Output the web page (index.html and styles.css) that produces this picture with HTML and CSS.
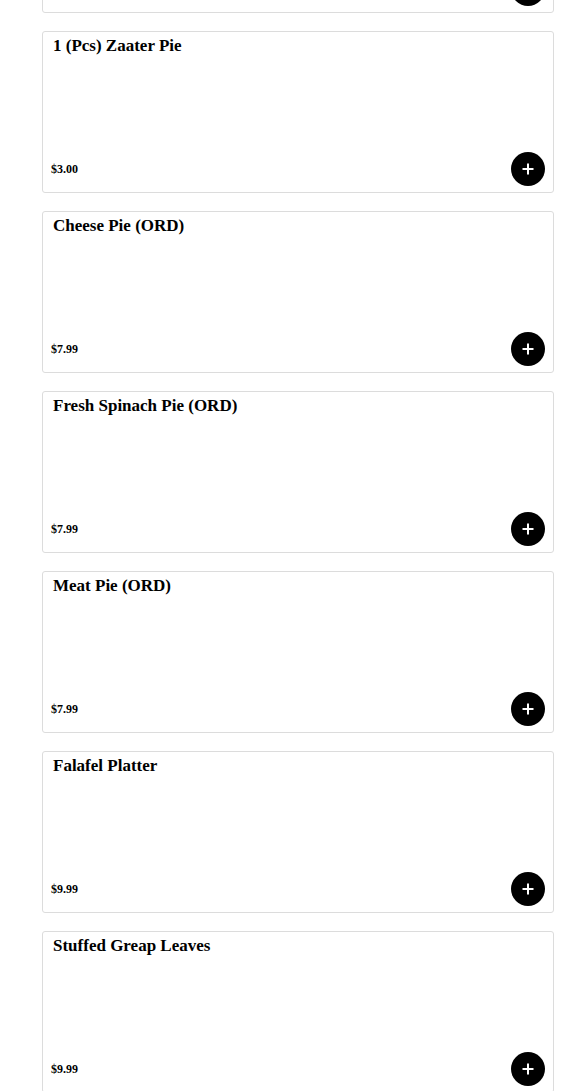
FILE: index.html
```html
<!DOCTYPE html>
<html>
<head>
<meta charset="utf-8">
<link rel="stylesheet" href="styles.css">
</head>
<body>
<main class="menu">
  <div class="list">
    <article class="card">
      <h3 class="title">Hummus</h3>
      <div class="bottom"><span class="price">$5.99</span><button class="add" aria-label="Add"><svg viewBox="0 0 12 12" width="12" height="12"><path d="M6 0.5V11.5M0.5 6H11.5" stroke="#fff" stroke-width="2" fill="none"/></svg></button></div>
    </article>
    <article class="card">
      <h3 class="title">1 (Pcs) Zaater Pie</h3>
      <div class="bottom"><span class="price">$3.00</span><button class="add" aria-label="Add"><svg viewBox="0 0 12 12" width="12" height="12"><path d="M6 0.5V11.5M0.5 6H11.5" stroke="#fff" stroke-width="2" fill="none"/></svg></button></div>
    </article>
    <article class="card">
      <h3 class="title">Cheese Pie (ORD)</h3>
      <div class="bottom"><span class="price">$7.99</span><button class="add" aria-label="Add"><svg viewBox="0 0 12 12" width="12" height="12"><path d="M6 0.5V11.5M0.5 6H11.5" stroke="#fff" stroke-width="2" fill="none"/></svg></button></div>
    </article>
    <article class="card">
      <h3 class="title">Fresh Spinach Pie (ORD)</h3>
      <div class="bottom"><span class="price">$7.99</span><button class="add" aria-label="Add"><svg viewBox="0 0 12 12" width="12" height="12"><path d="M6 0.5V11.5M0.5 6H11.5" stroke="#fff" stroke-width="2" fill="none"/></svg></button></div>
    </article>
    <article class="card">
      <h3 class="title">Meat Pie (ORD)</h3>
      <div class="bottom"><span class="price">$7.99</span><button class="add" aria-label="Add"><svg viewBox="0 0 12 12" width="12" height="12"><path d="M6 0.5V11.5M0.5 6H11.5" stroke="#fff" stroke-width="2" fill="none"/></svg></button></div>
    </article>
    <article class="card">
      <h3 class="title">Falafel Platter</h3>
      <div class="bottom"><span class="price">$9.99</span><button class="add" aria-label="Add"><svg viewBox="0 0 12 12" width="12" height="12"><path d="M6 0.5V11.5M0.5 6H11.5" stroke="#fff" stroke-width="2" fill="none"/></svg></button></div>
    </article>
    <article class="card">
      <h3 class="title">Stuffed Greap Leaves</h3>
      <div class="bottom"><span class="price">$9.99</span><button class="add" aria-label="Add"><svg viewBox="0 0 12 12" width="12" height="12"><path d="M6 0.5V11.5M0.5 6H11.5" stroke="#fff" stroke-width="2" fill="none"/></svg></button></div>
    </article>
  </div>
</main>
</body>
</html>
```
FILE: styles.css
```css
html, body {
  margin: 0;
  padding: 0;
  background: #fff;
}
body {
  font-family: "Liberation Serif", "Times New Roman", serif;
  color: #000;
  overflow: hidden;
}
.menu {
  padding: 0 31px 0 42px;
}
.list {
  display: flex;
  flex-direction: column;
  gap: 18px;
  margin-top: -149px;
}
.card {
  box-sizing: border-box;
  min-height: 162px;
  border: 1px solid #dcdcdc;
  border-radius: 3px;
  background: #fff;
  display: flex;
  flex-direction: column;
  justify-content: space-between;
  padding: 0 8px 6px 8px;
}
.title {
  margin: 0;
  padding: 4px 2px 0;
  font-size: 17px;
  font-weight: bold;
}
.bottom {
  display: flex;
  align-items: center;
  justify-content: space-between;
}
.price {
  font-size: 12px;
  font-weight: bold;
}
.add {
  width: 34px;
  height: 34px;
  border-radius: 50%;
  border: none;
  background: #000;
  padding: 0;
  display: flex;
  align-items: center;
  justify-content: center;
  cursor: pointer;
}
.add svg {
  display: block;
}
```
